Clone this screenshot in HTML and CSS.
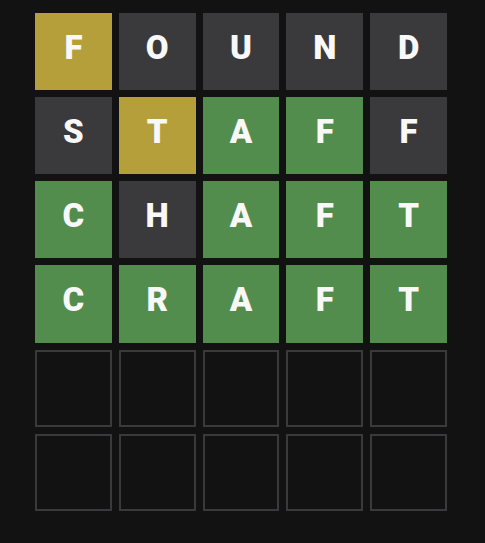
FILE: index.html
```html
<!DOCTYPE html>
<html>
<head>
<meta charset="utf-8">
<link rel="stylesheet" href="styles.css">
</head>
<body>
<div class="board">
  <div class="row">
    <div class="tile present">F</div>
    <div class="tile absent">O</div>
    <div class="tile absent">U</div>
    <div class="tile absent">N</div>
    <div class="tile absent">D</div>
  </div>
  <div class="row">
    <div class="tile absent">S</div>
    <div class="tile present">T</div>
    <div class="tile correct">A</div>
    <div class="tile correct">F</div>
    <div class="tile absent">F</div>
  </div>
  <div class="row">
    <div class="tile correct">C</div>
    <div class="tile absent">H</div>
    <div class="tile correct">A</div>
    <div class="tile correct">F</div>
    <div class="tile correct">T</div>
  </div>
  <div class="row">
    <div class="tile correct">C</div>
    <div class="tile correct">R</div>
    <div class="tile correct">A</div>
    <div class="tile correct">F</div>
    <div class="tile correct">T</div>
  </div>
  <div class="row">
    <div class="tile empty"></div>
    <div class="tile empty"></div>
    <div class="tile empty"></div>
    <div class="tile empty"></div>
    <div class="tile empty"></div>
  </div>
  <div class="row">
    <div class="tile empty"></div>
    <div class="tile empty"></div>
    <div class="tile empty"></div>
    <div class="tile empty"></div>
    <div class="tile empty"></div>
  </div>
</div>
</body>
</html>
```
FILE: styles.css
```css
html, body {
  margin: 0;
  padding: 0;
  background: #121213;
  height: 100%;
}
body {
  font-family: Roboto, "Liberation Sans", sans-serif;
}
.board {
  display: grid;
  grid-template-rows: repeat(6, 1fr);
  row-gap: 7px;
  width: 412px;
  height: 498px;
  margin: 13px 0 0 35px;
}
.row {
  display: grid;
  grid-template-columns: repeat(5, 1fr);
  column-gap: 7px;
}
.tile {
  box-sizing: border-box;
  display: flex;
  align-items: center;
  justify-content: center;
  color: #f8f8f8;
  font-size: 33px;
  font-weight: 900;
  line-height: 1;
  padding-bottom: 9px;
}
.present { background: #b59f3b; }
.absent { background: #3a3a3c; }
.correct { background: #538d4e; }
.empty { border: 2px solid #3a3a3c; }
```
